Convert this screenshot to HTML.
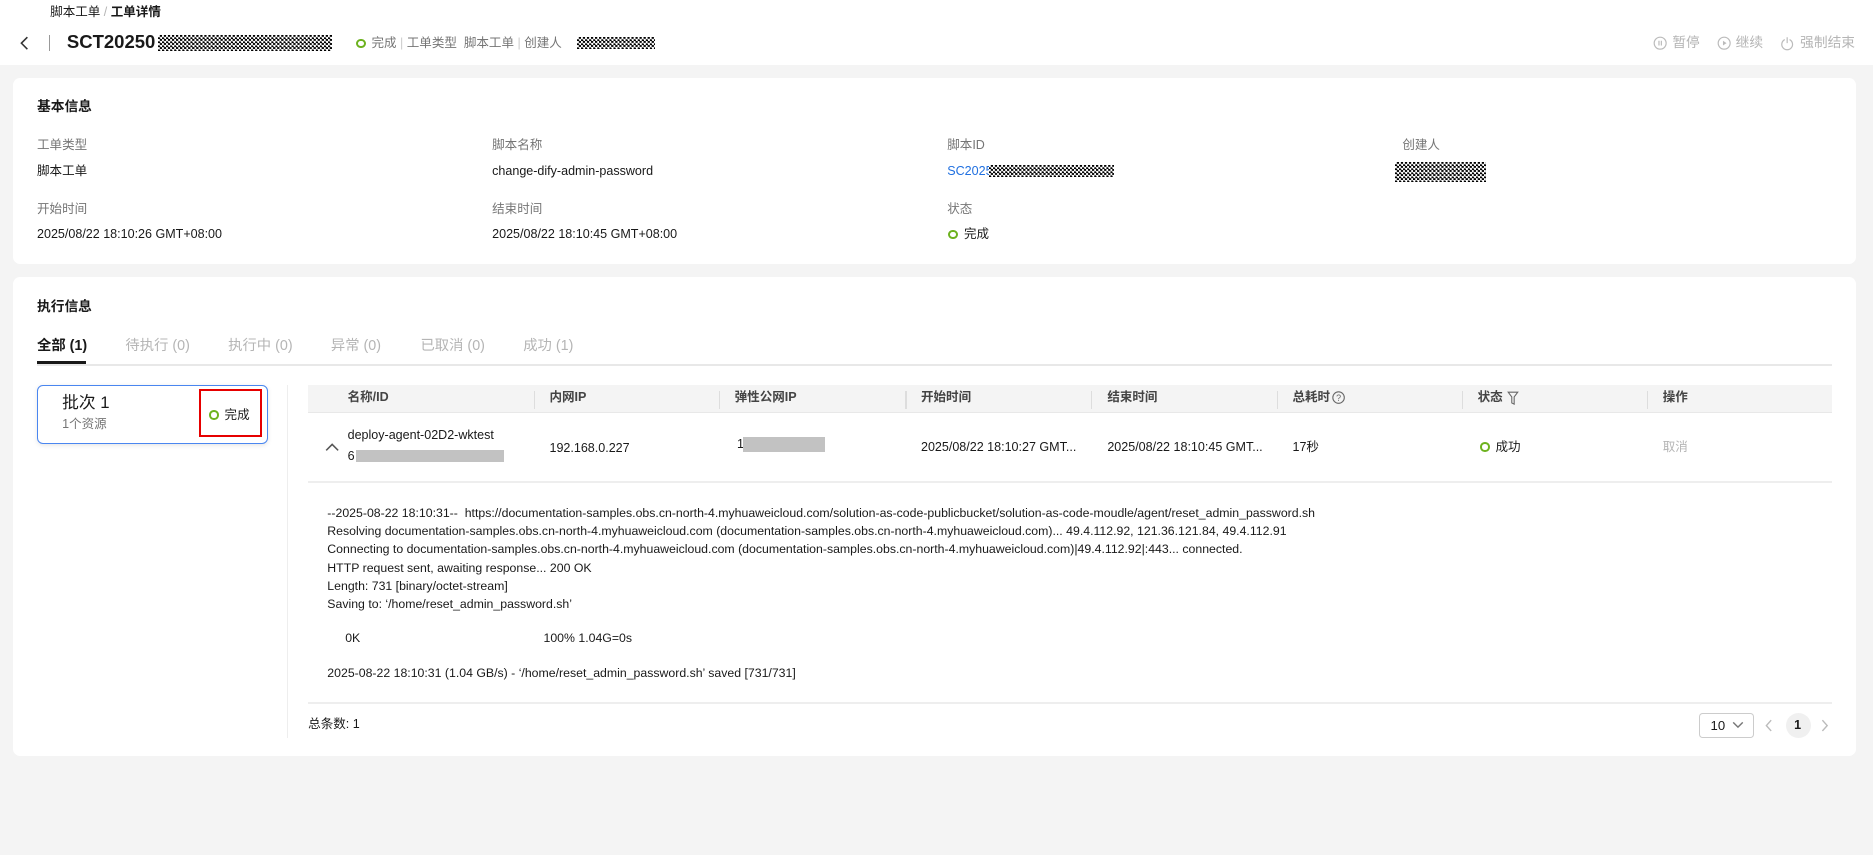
<!DOCTYPE html>
<html><head><meta charset="utf-8"><style>
*{margin:0;padding:0;box-sizing:border-box}
html,body{width:1873px;height:855px;overflow:hidden;background:#f4f4f4}
#r{position:relative;width:1568px;height:716px;zoom:1.19452;font-family:"Liberation Sans","Noto Sans CJK SC",sans-serif;font-size:10.5px;color:#191919}
.a{position:absolute;white-space:nowrap;line-height:1}
.g{color:#757575}.lg{color:#b5b5b5}
.chk{position:absolute;background:repeating-conic-gradient(#000 0 25%,#fff 0 50%) 0 0/3.4px 3.4px}
.card{position:absolute;background:#fff;border-radius:6px}
.ring{display:inline-block;width:8px;height:8px;border:2px solid #6db21f;border-radius:50%;vertical-align:-1px;margin-right:5px}
.gbar{position:absolute;background:#c2c2c2}
.th{font-weight:bold;color:#444}
.vd{position:absolute;top:327px;width:1px;height:15px;background:#ddd}
</style></head><body><div id="r">
<div style="position:absolute;left:0;top:0;width:1568px;height:54px;background:#fff"></div>
<div class="a" style="left:42px;top:5px;font-size:10.5px">脚本工单 <span class="lg">/</span> <b>工单详情</b></div>
<svg class="a" style="left:16px;top:30px" width="10" height="12"><path d="M7 1 2 6 7 11" fill="none" stroke="#333" stroke-width="1.3"/></svg>
<div style="position:absolute;left:41px;top:29px;width:1px;height:14px;background:#999"></div>
<div class="a" style="left:56px;top:28px;font-size:15.5px;font-weight:bold">SCT20250</div>
<div class="chk" style="left:132px;top:29px;width:146px;height:14px"></div>
<div class="a g" style="left:298px;top:31px"><span class="ring"></span>完成 <span style="color:#ccc">|</span> 工单类型&nbsp; 脚本工单 <span style="color:#ccc">|</span> 创建人</div>
<div class="chk" style="left:483px;top:31px;width:65px;height:10px"></div>
<svg class="a" style="left:1384px;top:30px" width="12" height="12"><circle cx="6" cy="6" r="5" fill="none" stroke="#bbb"/><path d="M5 4v4M7 4v4" stroke="#bbb"/></svg>
<div class="a lg" style="left:1400px;top:30px;font-size:11.5px">暂停</div>
<svg class="a" style="left:1437px;top:30px" width="12" height="12"><circle cx="6" cy="6" r="5" fill="none" stroke="#bbb"/><path d="M5 4l3 2-3 2z" fill="#bbb"/></svg>
<div class="a lg" style="left:1453px;top:30px;font-size:11.5px">继续</div>
<svg class="a" style="left:1490px;top:30px" width="12" height="13"><path d="M4 3A4.5 4.5 0 1 0 8 3M6 1v5" fill="none" stroke="#bbb"/></svg>
<div class="a lg" style="left:1507px;top:30px;font-size:11.5px">强制结束</div>

<div class="card" style="left:11px;top:65px;width:1543px;height:156px"></div>
<div class="a" style="left:31px;top:84px;font-weight:bold;font-size:11.5px">基本信息</div>
<div class="a g" style="left:31px;top:116px">工单类型</div><div class="a" style="left:31px;top:138px">脚本工单</div>
<div class="a g" style="left:412px;top:116px">脚本名称</div><div class="a" style="left:412px;top:138px">change-dify-admin-password</div>
<div class="a g" style="left:793px;top:116px">脚本ID</div><div class="a" style="left:793px;top:138px;color:#2070e0">SC2025</div>
<div class="chk" style="left:828px;top:138px;width:105px;height:10px"></div>
<div class="a g" style="left:1174px;top:116px">创建人</div>
<div class="chk" style="left:1168px;top:136px;width:76px;height:16px"></div>
<div class="a g" style="left:31px;top:170px">开始时间</div><div class="a" style="left:31px;top:191px">2025/08/22 18:10:26 GMT+08:00</div>
<div class="a g" style="left:412px;top:170px">结束时间</div><div class="a" style="left:412px;top:191px">2025/08/22 18:10:45 GMT+08:00</div>
<div class="a g" style="left:793px;top:170px">状态</div><div class="a" style="left:794px;top:191px"><span class="ring"></span>完成</div>

<div class="card" style="left:11px;top:232px;width:1543px;height:401px"></div>
<div class="a" style="left:31px;top:251px;font-weight:bold;font-size:11.5px">执行信息</div>
<div class="a" style="left:31px;top:284px;font-size:12px;font-weight:bold">全部 (1)</div>
<div class="a lg" style="left:105px;top:284px;font-size:12px">待执行 (0)</div>
<div class="a lg" style="left:191px;top:284px;font-size:12px">执行中 (0)</div>
<div class="a lg" style="left:277px;top:284px;font-size:12px">异常 (0)</div>
<div class="a lg" style="left:352px;top:284px;font-size:12px">已取消 (0)</div>
<div class="a lg" style="left:438px;top:284px;font-size:12px">成功 (1)</div>
<div style="position:absolute;left:31px;top:305px;width:1503px;height:1px;background:#e8e8e8"></div>
<div style="position:absolute;left:31px;top:302px;width:41px;height:3px;background:#191919"></div>

<div style="position:absolute;left:31px;top:322px;width:193px;height:50px;border:1px solid #4a86f0;border-radius:5px;box-shadow:0 1px 4px rgba(0,0,0,.1)"></div>
<div class="a" style="left:52px;top:331px;font-size:14px">批次 1</div>
<div class="a g" style="left:52px;top:350px">1个资源</div>
<div style="position:absolute;left:167px;top:326px;width:52px;height:40px;border:2px solid #e60000"></div>
<div class="a" style="left:175px;top:342px"><span class="ring"></span>完成</div>
<div style="position:absolute;left:240px;top:322px;width:1px;height:296px;background:#eee"></div>

<div style="position:absolute;left:258px;top:322px;width:1276px;height:24px;background:#f4f4f4;border-bottom:1px solid #e8e8e8"></div>
<div class="a th" style="left:291px;top:327px">名称/ID</div>
<div class="vd" style="left:447px"></div><div class="a th" style="left:460px;top:327px">内网IP</div>
<div class="vd" style="left:602px"></div><div class="a th" style="left:615px;top:327px">弹性公网IP</div>
<div class="vd" style="left:758px"></div><div class="a th" style="left:771px;top:327px">开始时间</div>
<div class="vd" style="left:913px"></div><div class="a th" style="left:927px;top:327px">结束时间</div>
<div class="vd" style="left:1069px"></div><div class="a th" style="left:1082px;top:327px">总耗时</div>
<svg class="a" style="left:1115px;top:327px" width="11" height="11"><circle cx="5.5" cy="5.5" r="4.8" fill="none" stroke="#666" stroke-width=".9"/><text x="5.5" y="8.3" font-size="7.5" text-anchor="middle" fill="#666" font-family="Liberation Sans">?</text></svg>
<div class="vd" style="left:1224px"></div><div class="a th" style="left:1237px;top:327px">状态</div>
<svg class="a" style="left:1262px;top:327px" width="10" height="12"><path d="M1 1h8L6 5v6L4 10V5z" fill="none" stroke="#666" stroke-width=".9"/></svg>
<div class="vd" style="left:1379px"></div><div class="a th" style="left:1392px;top:327px">操作</div>

<svg class="a" style="left:272px;top:370px" width="12" height="8"><path d="M1 7 6 2 11 7" fill="none" stroke="#555" stroke-width="1.3"/></svg>
<div class="a" style="left:291px;top:359px">deploy-agent-02D2-wktest</div>
<div class="a" style="left:291px;top:377px">6</div>
<div class="gbar" style="left:298px;top:377px;width:124px;height:10px"></div>
<div class="a" style="left:460px;top:370px">192.168.0.227</div>
<div class="a" style="left:617px;top:367px">1</div>
<div class="gbar" style="left:622px;top:366px;width:69px;height:12px"></div>
<div class="a" style="left:771px;top:369px">2025/08/22 18:10:27 GMT...</div>
<div class="a" style="left:927px;top:369px">2025/08/22 18:10:45 GMT...</div>
<div class="a" style="left:1082px;top:369px">17秒</div>
<div class="a" style="left:1239px;top:369px"><span class="ring"></span>成功</div>
<div class="a lg" style="left:1392px;top:369px">取消</div>
<div style="position:absolute;left:258px;top:403px;width:1276px;height:1px;background:#eee"></div>

<div class="a" style="left:274px;top:422px;line-height:15.2px;font-size:10.3px">--2025-08-22 18:10:31--&nbsp; https://documentation-samples.obs.cn-north-4.myhuaweicloud.com/solution-as-code-publicbucket/solution-as-code-moudle/agent/reset_admin_password.sh<br>Resolving documentation-samples.obs.cn-north-4.myhuaweicloud.com (documentation-samples.obs.cn-north-4.myhuaweicloud.com)... 49.4.112.92, 121.36.121.84, 49.4.112.91<br>Connecting to documentation-samples.obs.cn-north-4.myhuaweicloud.com (documentation-samples.obs.cn-north-4.myhuaweicloud.com)|49.4.112.92|:443... connected.<br>HTTP request sent, awaiting response... 200 OK<br>Length: 731 [binary/octet-stream]<br>Saving to: ‘/home/reset_admin_password.sh’</div>
<div class="a" style="left:289px;top:529px;font-size:10.3px">0K</div>
<div class="a" style="left:455px;top:529px;font-size:10.3px">100% 1.04G=0s</div>
<div class="a" style="left:274px;top:558px;font-size:10.3px">2025-08-22 18:10:31 (1.04 GB/s) - ‘/home/reset_admin_password.sh’ saved [731/731]</div>
<div style="position:absolute;left:258px;top:588px;width:1276px;height:1px;background:#eee"></div>
<div class="a" style="left:258px;top:601px">总条数: 1</div>
<div style="position:absolute;left:1422px;top:597px;width:46px;height:21px;border:1px solid #ccc;border-radius:3px"></div>
<div class="a" style="left:1432px;top:602px;font-size:11px">10</div>
<svg class="a" style="left:1450px;top:603px" width="10" height="8"><path d="M1 2 5 6 9 2" fill="none" stroke="#777" stroke-width="1.2"/></svg>
<svg class="a" style="left:1477px;top:602px" width="8" height="11"><path d="M6 1 2 5.5 6 10" fill="none" stroke="#bbb" stroke-width="1.2"/></svg>
<div style="position:absolute;left:1495px;top:597px;width:21px;height:21px;border-radius:50%;background:#f0f0f0"></div>
<div class="a" style="left:1502px;top:602px;font-weight:bold">1</div>
<svg class="a" style="left:1524px;top:602px" width="8" height="11"><path d="M2 1 6 5.5 2 10" fill="none" stroke="#bbb" stroke-width="1.2"/></svg>
</div></body></html>
